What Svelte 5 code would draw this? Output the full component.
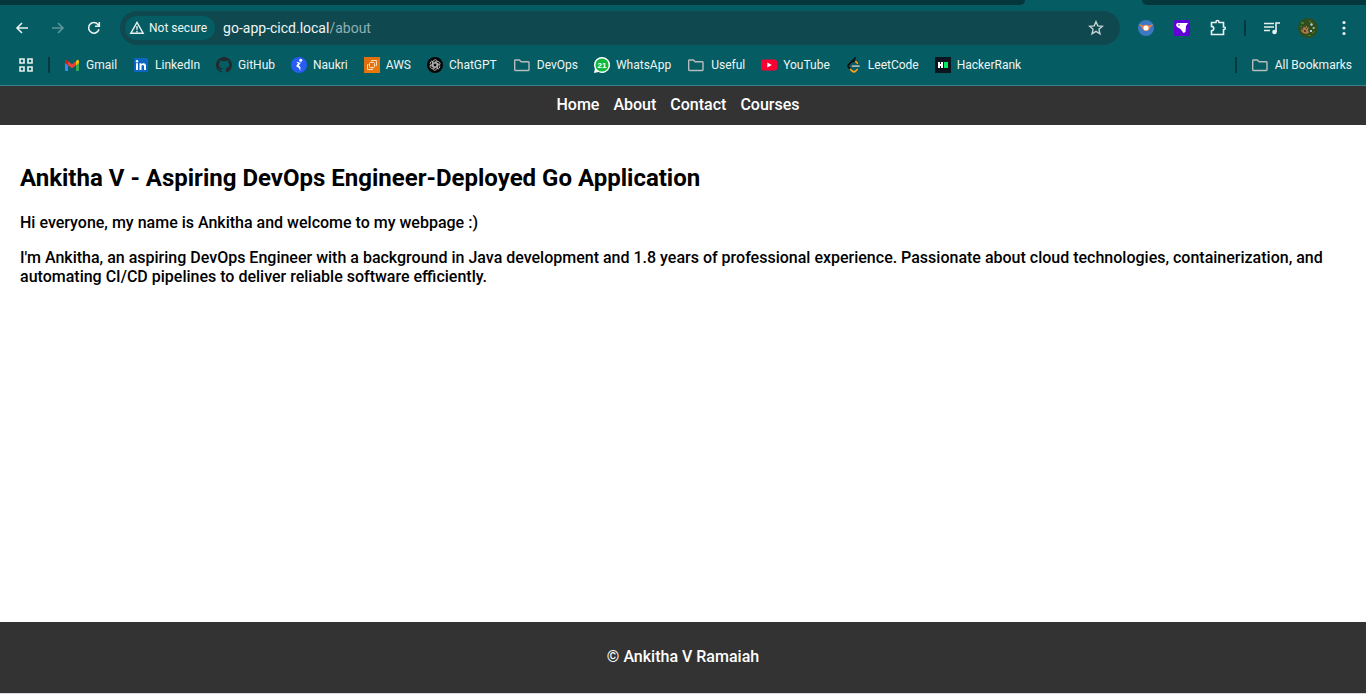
<script>
  const bookmarks = [
    { name: 'Gmail', icon: 'gmail' },
    { name: 'LinkedIn', icon: 'linkedin' },
    { name: 'GitHub', icon: 'github' },
    { name: 'Naukri', icon: 'naukri' },
    { name: 'AWS', icon: 'aws' },
    { name: 'ChatGPT', icon: 'chatgpt' },
    { name: 'DevOps', icon: 'folder' },
    { name: 'WhatsApp', icon: 'whatsapp' },
    { name: 'Useful', icon: 'folder' },
    { name: 'YouTube', icon: 'youtube' },
    { name: 'LeetCode', icon: 'leetcode' },
    { name: 'HackerRank', icon: 'hackerrank' }
  ];
  const links = ['Home', 'About', 'Contact', 'Courses'];
  let address = $state('go-app-cicd.local/about');
  let host = $derived(address.split('/')[0]);
  let path = $derived(address.slice(host.length));
</script>

{#snippet siteIcon(name)}
  <svg class="icon" viewBox="0 0 16 16" aria-hidden="true">
    {#if name === 'gmail'}
      <path d="M1 4v9.200q0 .8.8.8H4V7z" fill="#4285f4" />
      <path d="M15 4v9.200q0 .8-.8.8H12V7z" fill="#34a853" />
      <path d="M12 4.200 13 3q2-1 2 1.400V6l-3 2.300z" fill="#fbbc04" />
      <path d="M4 4.200 8 7.200l4-3v4.100l-4 3-4-3z" fill="#ea4335" />
      <path d="M4 4.200 3 3Q1 2 1 4.400V6l3 2.300z" fill="#c5221f" />
    {:else if name === 'linkedin'}
      <rect x="1" y="1" width="14" height="14" rx="1" fill="#0a66c2" />
      <path d="M3 6.300h2V13H3zM6.500 6.300h1.900v1c1-1.700 4.600-1.600 4.600 1.500V13h-2V9.500c0-2.200-2.500-2-2.500 0V13h-2z" fill="#fff" />
      <circle cx="4" cy="4.200" r="1.200" fill="#fff" />
    {:else if name === 'github'}
      <path d="M8 0a8 8 0 0 0-2.530 15.590c.4.070.55-.17.55-.38v-1.490c-2.230.48-2.690-.95-2.690-.95-.36-.92-.89-1.170-.89-1.170-.73-.5.060-.49.060-.49.800.060 1.230.830 1.230.830.710 1.220 1.870.870 2.330.660.070-.52.280-.87.500-1.070-1.770-.2-3.640-.89-3.640-3.950 0-.87.310-1.590.820-2.150-.08-.2-.36-1.020.080-2.120 0 0 .67-.21 2.200.820a7.600 7.600 0 0 1 4 0c1.530-1.040 2.200-.820 2.200-.820.440 1.100.160 1.920.080 2.120.510.560.820 1.270.820 2.150 0 3.070-1.870 3.750-3.650 3.950.290.250.540.730.540 1.480v2.200c0 .210.150.460.550.380A8 8 0 0 0 8 0z" fill="#24292e" />
    {:else if name === 'naukri'}
      <circle cx="8" cy="8" r="8" fill="#275df5" />
      <circle cx="9.700" cy="3.300" r="1.500" fill="#fff" />
      <path d="M5.500 4.700c1.800 0 2.400 1.200 4.700.900L7.700 8.600c1.900.900 2.200 2.700 1.400 5.300-.500-2.300-1.400-3.500-3.800-4.300.200-1.700 1-2.300 1.900-3-.900-.500-1.500-1-1.700-1.900z" fill="#fff" />
    {:else if name === 'aws'}
      <rect width="16" height="16" fill="#e8770c" />
      <path d="M0 16 16 0H0z" fill="#d86613" opacity=".45" />
      <g fill="none" stroke="#ffdcb8" stroke-width="1">
        <path d="M7.500 4.500v-1h5v5h-1M4.500 7.500h-1v5h5v-1" />
        <rect x="5.500" y="5.500" width="5" height="5" rx="1" />
      </g>
    {:else if name === 'chatgpt'}
      <circle cx="8" cy="8" r="8" fill="#050505" />
      <g fill="none" stroke="#c8c8c8" stroke-width=".8">
        {#each [0, 60, 120, 180, 240, 300] as turn}
          <path transform={`rotate(${turn} 8 8)`} d="M6.200 9V4.600q.3-2 2.200-1.900 1.200.1 1.700 1L6.400 6" />
        {/each}
      </g>
    {:else if name === 'whatsapp'}
      <path d="M8 0a8 8 0 1 1-3.600 15.100L0 16l.9-4.300A8 8 0 0 1 8 0z" fill="#fff" />
      <circle cx="8" cy="8" r="6.600" fill="#12b83e" />
      <text x="8" y="10.800" text-anchor="middle" class="count">21</text>
    {:else if name === 'youtube'}
      <rect y="2.500" width="16" height="11" rx="2.500" fill="#ff0033" />
      <path d="M6.300 5.500v5L10.800 8z" fill="#fff" />
    {:else if name === 'leetcode'}
      <g fill="none" stroke-width="1.700" stroke-linecap="round">
        <path d="M9.200 1 2.700 7.600q-1.200 1.400 0 2.800l1.600 1.700M6 4.500q2-1.400 3.800.2l1.500 1.500" stroke="#111" />
        <path d="m4.500 12.300 1.700 1.700q1.800 1.500 3.500 0l1.500-1.500M9.800 4.700l1.500 1.500" stroke="#ffa116" />
        <path d="M6.500 9.200h6.500" stroke="#b3b3b3" />
      </g>
    {:else if name === 'hackerrank'}
      <rect width="16" height="16" fill="#0e141e" />
      <path d="M3 5h2v2h1V5h2v6H6V9H5v2H3z" fill="#fff" />
      <rect x="9" y="5" width="4" height="6" fill="#00ea64" />
    {/if}
  </svg>
{/snippet}

{#snippet folder()}
  <svg class="folder" viewBox="0 0 18 16" aria-hidden="true">
    <path d="M1.700 12.500V3.700q0-.7.7-.7h4l1.700 1.700h7.200q.7 0 .7.700v7.400q0 .7-.7.700H2.400q-.7 0-.7-1z" fill="none" stroke="#b9bcbc" stroke-width="1.400" />
  </svg>
{/snippet}

<div class="window">
  <header class="browser">
    <div class="tabs"><span class="tab-group"></span><span class="tab-rest"></span></div>
    <div class="toolbar">
      <div class="controls">
        <button aria-label="Back"><svg viewBox="0 0 16 16"><path d="M14 8H3M8 3 3 8l5 5" /></svg></button>
        <button aria-label="Forward" class="dim"><svg viewBox="0 0 16 16"><path d="M2 8h11M8 3l5 5-5 5" /></svg></button>
        <button aria-label="Reload"><svg viewBox="0 0 16 16"><path d="M13 9.300A5.300 5.300 0 1 1 12 4.500l1.200 1.400M13.300 2v4.300H9" /></svg></button>
      </div>
      <div class="omnibox">
        <button class="chip">
          <svg viewBox="0 0 16 16"><path d="M8 2.400 1.800 13.300h12.400zM8 6v3.800M8 10.700v1.500" /></svg>
          Not secure
        </button>
        <label class="address">
          <span class="url" aria-hidden="true"><span>{host}</span><span class="path">{path}</span></span>
          <input type="text" aria-label="Address" bind:value={address} />
        </label>
        <button class="star" aria-label="Bookmark this page">
          <svg viewBox="0 0 16 16"><path d="m8 1.700 1.800 4.200 4.600.4-3.500 3 1.100 4.500L8 11.400l-4 2.400 1.100-4.500-3.500-3 4.600-.4z" /></svg>
        </button>
      </div>
      <div class="extensions">
        <button aria-label="Drone extension">
          <svg viewBox="0 0 16 16"><circle cx="8" cy="8" r="8" fill="#3b78c3" stroke="none" /><path d="m.7 4 4.300 1.500Q8 3.800 11 5.500L15.300 4 11.800 8a3.900 3.900 0 0 1-7.600 0z" fill="#f18345" stroke="none" /><circle cx="8" cy="8" r="2.500" fill="#fff" stroke="none" /></svg>
        </button>
        <button aria-label="Shopping extension">
          <svg viewBox="0 0 16 16"><rect width="16" height="16" rx="2" fill="#6200d8" stroke="none" /><path d="M3 3h11l-2 3-.5 6-2 1-3-4-3.500-2L2 5z" fill="#fff" stroke="none" /><circle cx="5" cy="5" r=".8" fill="#6200d8" stroke="none" /></svg>
        </button>
        <button aria-label="Extensions">
          <svg class="puzzle" viewBox="0 0 18 18"><path d="M2.500 3.500H7V3q0-1.500 1.500-1.500T10 3v.5h4.500V8h.5q1.300 0 1.300 1.300T15 10.600h-.5v4.900h-12v-3.700q2.300-.2 2.300-2.200T2.500 7.400z" /></svg>
        </button>
        <span class="divider"></span>
        <button aria-label="Media controls">
          <svg viewBox="0 0 16 16"><path d="M0 3.500h10M0 7h10M0 10.500h6M12 12V3h4" /><circle cx="10.500" cy="12" r="2.300" fill="#e8f0f0" stroke="none" /></svg>
        </button>
        <button aria-label="Profile">
          <svg class="avatar" viewBox="0 0 20 20"><circle cx="10" cy="10" r="10" fill="#2d4e1f" stroke="none" /><path d="M3 4h3v2H3zm7-2 4 2-2 1zM2 8h2v1H2zm12 6 3-1-2 3zm-4 3h3v1h-3z" fill="#50752c" stroke="none" /><path d="m3 13 1-3 1 1 1-3 1 2 2-3v3l2-1-1 3 1 3-3 1-3-1z" fill="#a8784a" stroke="none" /><path d="m12 6 2-1 1 2-2 1zm0 6h2v2h-2zm2-2 2-1 1 1-1 1z" fill="#b5cbd3" stroke="none" /><path d="M6 12h2v2H6zM4 11h1v1H4zm4-1h1v1H8z" fill="#5a3d21" stroke="none" /></svg>
        </button>
        <button aria-label="Menu">
          <svg viewBox="0 0 16 16"><g fill="#e8f0f0" stroke="none"><circle cx="8" cy="2.500" r="1.600" /><circle cx="8" cy="8" r="1.600" /><circle cx="8" cy="13.500" r="1.600" /></g></svg>
        </button>
      </div>
    </div>
    <div class="bookmarks">
      <button class="apps" aria-label="Apps"><svg viewBox="0 0 16 16"><path d="M2 2h4v4H2zM10 2h4v4h-4zM2 10h4v4H2zM10 10h4v4h-4z" /></svg></button>
      <span class="divider"></span>
      <div class="sites">
        {#each bookmarks as item}
          <a href="#{item.name}">
            {#if item.icon === 'folder'}{@render folder()}{:else}{@render siteIcon(item.icon)}{/if}
            {item.name}
          </a>
        {/each}
      </div>
      <span class="divider"></span>
      <a class="all" href="#all">{@render folder()}All Bookmarks</a>
    </div>
  </header>

  <nav>
    {#each links as link}
      <a href="#{link.toLowerCase()}">{link}</a>
    {/each}
  </nav>

  <main>
    <h1>Ankitha V - Aspiring DevOps Engineer-Deployed Go Application</h1>
    <p>Hi everyone, my name is Ankitha and welcome to my webpage :)</p>
    <p>I'm Ankitha, an aspiring DevOps Engineer with a background in Java development and 1.8 years of professional experience. Passionate about cloud technologies, containerization, and automating CI/CD pipelines to deliver reliable software efficiently.</p>
  </main>

  <footer>© Ankitha V Ramaiah</footer>
  <div class="edge"></div>
</div>

<style>
  .window {
    display: flex;
    flex-direction: column;
    min-height: 100vh;
    background: #fff;
    color: #000;
    font: 500 16px/19px Bahnschrift, Roboto, sans-serif;
  }
  button {
    display: flex;
    align-items: center;
    justify-content: center;
    padding: 0;
    border: 0;
    background: none;
    color: inherit;
    font: inherit;
  }
  a {
    color: inherit;
    text-decoration: none;
  }
  .browser {
    background: #055c62;
    border-bottom: 1px solid #3b8287;
    color: #eef5f5;
    font: 12px/16px "Segoe UI", Roboto, sans-serif;
  }
  .browser svg {
    display: block;
    flex: none;
    width: 16px;
    height: 16px;
  }
  .browser button svg {
    fill: none;
    stroke: #e8f0f0;
    stroke-width: 1.600;
  }
  .tabs {
    display: flex;
    justify-content: space-between;
    height: 5px;
  }
  .tab-group {
    width: 75%;
    background: #04373d;
    border-bottom-right-radius: 8px;
  }
  .tab-rest {
    width: 224px;
    background: #04373d;
    border-bottom-left-radius: 8px;
  }
  .toolbar {
    display: flex;
    align-items: center;
    height: 46px;
    padding: 0 4px 0 14px;
  }
  .controls {
    display: flex;
    gap: 20px;
    padding-right: 18px;
  }
  .browser .dim svg {
    stroke: #5d9599;
  }
  .omnibox {
    display: flex;
    flex: 1;
    align-items: center;
    height: 34px;
    padding: 0 16px 0 5px;
    border-radius: 17px;
    background: #10484f;
  }
  .chip {
    gap: 4px;
    height: 24px;
    padding: 0 8px 0 4px;
    border-radius: 12px;
    background: #055c62;
  }
  .browser .chip svg {
    stroke-width: 1.400;
  }
  .address {
    display: grid;
    flex: 1;
    padding-left: 8px;
    font-size: 14px;
    line-height: 20px;
  }
  .url,
  .address input {
    grid-area: 1 / 1;
  }
  .path {
    color: #8fb0b3;
  }
  .address input {
    min-width: 0;
    padding: 0;
    border: 0;
    outline: 0;
    background: none;
    color: transparent;
    font: inherit;
  }
  .browser .star svg {
    stroke: #c6d3d4;
    stroke-width: 1.400;
  }
  .extensions {
    display: flex;
    align-items: center;
    padding-left: 8px;
  }
  .extensions button {
    width: 36px;
    height: 34px;
  }
  .divider {
    flex: none;
    width: 2px;
    height: 16px;
    background: #04393f;
  }
  .extensions .divider {
    margin: 0 8px;
  }
  .browser .puzzle {
    width: 18px;
    height: 18px;
  }
  .browser .avatar {
    width: 20px;
    height: 20px;
  }
  .bookmarks {
    display: flex;
    align-items: center;
    padding: 6px 14px 12px 18px;
  }
  .apps {
    margin-right: 14px;
  }
  .sites {
    display: flex;
    flex: 1;
    gap: 16px;
    padding-left: 14px;
  }
  .bookmarks a {
    display: flex;
    align-items: center;
    gap: 6px;
    white-space: nowrap;
  }
  .browser .folder {
    width: 18px;
  }
  .bookmarks .all {
    padding-left: 14px;
  }
  .count {
    fill: #fff;
    font: bold 8px "Liberation Sans", sans-serif;
  }
  nav {
    display: flex;
    justify-content: center;
    gap: 14px;
    padding: 9px 30px 11px 20px;
    background: #333;
    color: #fff;
  }
  main {
    flex: 1;
    padding: 20px;
  }
  h1 {
    margin: 19px 0 21px;
    font-size: 24px;
    line-height: 28px;
    font-weight: 700;
  }
  p {
    margin: 16px 0;
  }
  footer {
    padding: 25px 20px 27px;
    background: #333;
    color: #fff;
    text-align: center;
  }
  .edge {
    height: 1px;
    background: #d9dbe6;
  }
</style>
